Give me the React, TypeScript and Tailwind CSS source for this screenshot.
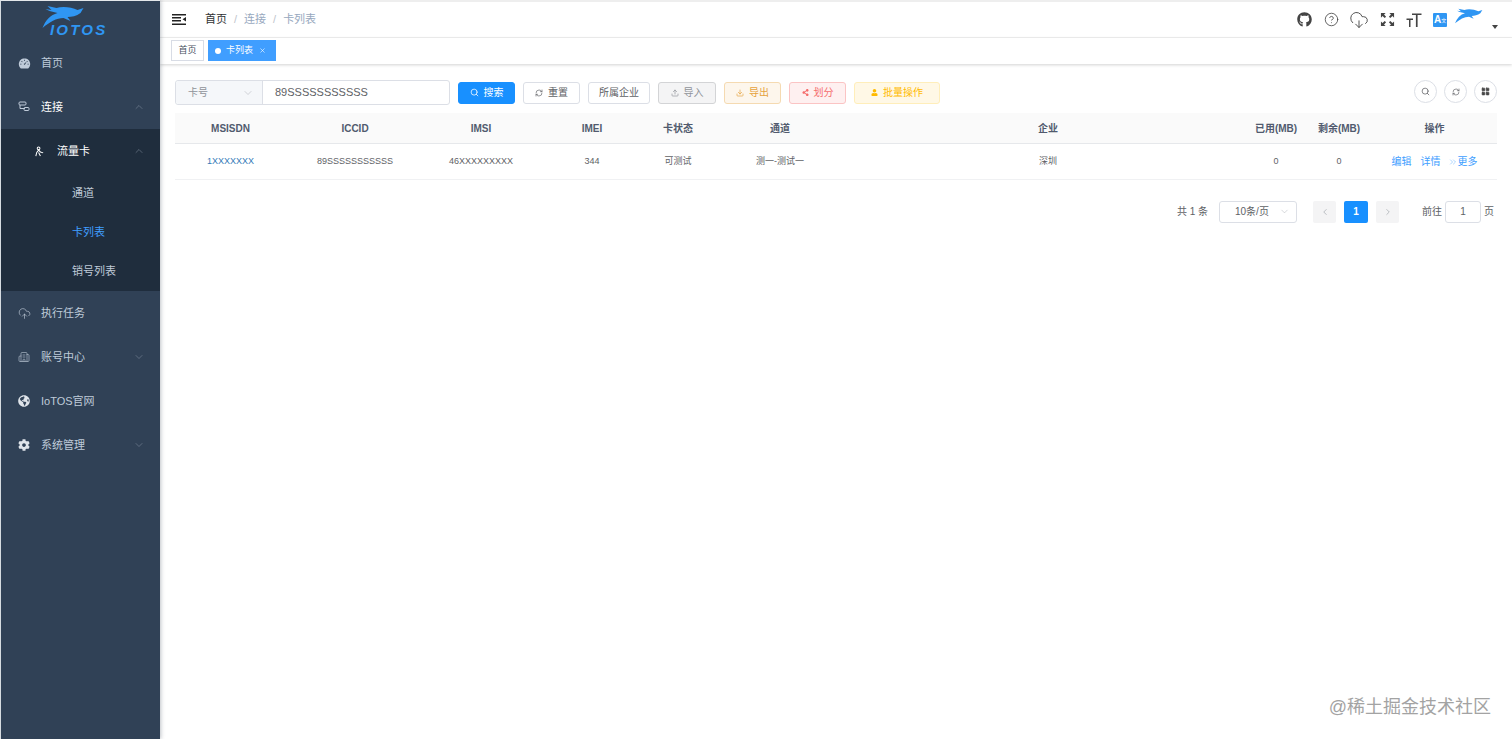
import React from "react";
import { Search, RefreshCw, Upload, Download, ChevronUp, ChevronDown, ChevronLeft, ChevronRight, ChevronsRight, CloudUpload, CloudDownload, Building2, X, LayoutGrid, CircleHelp } from "lucide-react";
import { AiFillDashboard } from "react-icons/ai";
import { FaGithub, FaGlobeAmericas, FaCog, FaUser, FaShareAlt } from "react-icons/fa";

const Bird = ({ className }: { className: string }) => (
  <svg viewBox="0 0 42 24" className={className} fill="#2f96f3">
    <path d="M0 23C3 15 8 10 15 8L7 6 3 4 9 5 5 1 14 3C20 1 29 2 35 5L41 3 38 8C34 11 29 12 25 12L28 16 21 13C14 13 7 17 0 23Z" />
  </svg>
);

const NetIcon = () => (
  <svg viewBox="0 0 12 12" className="w-[12px] h-[12px]" fill="none" stroke="#bfcbd9" strokeWidth="1">
    <rect x="1" y="1" width="7" height="3" rx="1" />
    <path d="M2 4v3.5h5" />
    <rect x="6" y="6.5" width="5" height="3" rx="1" />
  </svg>
);

const PersonIcon = () => (
  <svg viewBox="0 0 12 12" className="w-[11px] h-[11px]" fill="none" stroke="#ffffff" strokeWidth="1.1">
    <circle cx="5" cy="2.5" r="1.5" />
    <path d="M2 11l1-4 2-2.500 2 2 3 1M5 7l2 4" />
  </svg>
);

const TextSizeIcon = () => (
  <svg viewBox="0 0 16 16" className="w-[16px] h-[16px]" fill="#444">
    <path d="M6 1.500h9.500v1.600h-3.900V15h-1.700V3.100H6zM.5 6.500h6.500v1.400H4.500V15H3V7.900H.5z" />
  </svg>
);

const FullIcon = () => (
  <svg viewBox="0 0 16 16" className="w-[15px] h-[15px]" fill="#444">
    <path d="M1 1h5L4.300 2.700 6.500 5 5 6.500 2.700 4.300 1 6zM15 1v5l-1.700-1.700L11 6.500 9.500 5l2.200-2.300L10 1zM1 15v-5l1.700 1.700L5 9.500 6.500 11l-2.200 2.300L6 15zM15 15h-5l1.700-1.700L9.500 11 11 9.500l2.300 2.200L15 10z" />
  </svg>
);

const Side = ({ icon, label, arrow, active }: { icon: React.ReactNode; label: string; arrow?: "up" | "down"; active?: boolean }) => (
  <div className="h-[44px] flex items-center pl-[16px] pr-[15px] shrink-0">
    <span className="w-[14px] flex justify-center mr-[10px]">{icon}</span>
    <span className={active ? "text-[11px] text-white" : "text-[11px] text-[#bfcbd9]"}>{label}</span>
    {arrow === "up" && <ChevronUp className="ml-auto text-[#8a97a6]" size={12} strokeWidth={1} />}
    {arrow === "down" && <ChevronDown className="ml-auto text-[#8a97a6]" size={12} strokeWidth={1} />}
  </div>
);

const Btn = ({ cls, icon, label }: { cls: string; icon?: React.ReactNode; label: string }) => (
  <div className={"h-[22px] flex items-center justify-center gap-[5px] rounded-[3px] border text-[10px] " + cls}>
    {icon}
    <span>{label}</span>
  </div>
);

const cols = "grid grid-cols-[111px_138px_114px_108px_64px_140px_396px_60px_66px_125px]";
const headers = ["MSISDN", "ICCID", "IMSI", "IMEI", "卡状态", "通道", "企业", "已用(MB)", "剩余(MB)", "操作"];

export default function App() {
  return (
    <div className="relative w-full h-screen flex bg-white overflow-hidden text-[#606266] font-['Liberation_Sans','Noto_Sans_CJK_SC',sans-serif]">
      <aside className="w-[160px] shrink-0 h-full bg-[#304156] border-l border-l-[#d5dbe0] border-t border-t-[#e4e7ea] flex flex-col shadow-[1px_0_4px_rgba(0,21,41,0.25)] z-10">
        <div className="h-[40px] shrink-0 relative pl-[41px] pt-[4px]">
          <Bird className="w-[43px] h-[24px]" />
          <span className="absolute left-[49px] top-[21px] text-[15px] leading-[16px] font-bold italic tracking-[2.2px] text-[#2f96f3]">IOTOS</span>
        </div>
        <Side icon={<AiFillDashboard size={13} color="#bfcbd9" />} label="首页" />
        <Side icon={<NetIcon />} label="连接" arrow="up" active />
        <div className="bg-[#1f2d3d] flex flex-col shrink-0">
          <div className="h-[44px] flex items-center pl-[32px] pr-[15px]">
            <span className="w-[12px] flex justify-center mr-[12px]"><PersonIcon /></span>
            <span className="text-[11px] text-white">流量卡</span>
            <ChevronUp className="ml-auto text-[#8a97a6]" size={12} strokeWidth={1} />
          </div>
          <div className="h-[39.5px] flex items-center pl-[71px] text-[11px] text-[#bfcbd9]">通道</div>
          <div className="h-[39.5px] flex items-center pl-[71px] text-[11px] text-[#409eff]">卡列表</div>
          <div className="h-[39px] flex items-center pl-[71px] text-[11px] text-[#bfcbd9]">销号列表</div>
        </div>
        <Side icon={<CloudUpload size={13} color="#bfcbd9" strokeWidth={1.2} />} label="执行任务" />
        <Side icon={<Building2 size={12} color="#bfcbd9" strokeWidth={1.2} />} label="账号中心" arrow="down" />
        <Side icon={<FaGlobeAmericas size={12} color="#dfe4ea" />} label="IoTOS官网" />
        <Side icon={<FaCog size={12} color="#dfe4ea" />} label="系统管理" arrow="down" />
      </aside>

      <main className="flex-1 min-w-0 flex flex-col border-t-2 border-t-[#eeeeee]">
        <header className="h-[36px] shrink-0 flex items-center pl-[12px] pr-[14px] border-b border-b-[#f0f0f0]">
          <svg viewBox="0 0 14 11" className="w-[14px] h-[11px] mr-[19px]" fill="#222">
            <path d="M0 0h14v1.500H0zM0 3h9v1.500H0zM0 6h9v1.500H0zM0 9.500h14V11H0zM14 3v4.500L10.500 5.300z" />
          </svg>
          <span className="text-[11px] text-[#303133]">首页</span>
          <span className="text-[11px] text-[#c0c4cc] mx-[7px]">/</span>
          <span className="text-[11px] text-[#97a8be]">连接</span>
          <span className="text-[11px] text-[#c0c4cc] mx-[7px]">/</span>
          <span className="text-[11px] text-[#97a8be]">卡列表</span>
          <div className="ml-auto flex items-center">
            <FaGithub size={15} color="#444" />
            <CircleHelp size={15} color="#444" strokeWidth={1.3} className="ml-[12px]" />
            <CloudDownload size={20} color="#444" strokeWidth={1.1} className="ml-[10px]" />
            <span className="ml-[11px]"><FullIcon /></span>
            <span className="ml-[11px]"><TextSizeIcon /></span>
            <div className="ml-[11px] w-[14px] h-[14px] rounded-[1px] bg-[#2f96f3] text-white text-[10px] font-bold leading-[14px] pl-[1px]">A<span className="text-[5px] align-top font-normal">文</span></div>
            <Bird className="ml-[8px] w-[28px] h-[18px] -mt-[8px]" />
            <svg viewBox="0 0 6 4" className="w-[6px] h-[4px] ml-[9px] mt-[15px]" fill="#444"><path d="M0 0h6L3 4z" /></svg>
          </div>
        </header>

        <div className="h-[26px] shrink-0 flex items-start pt-[2px] pl-[11px] gap-[4px] shadow-[0_1px_3px_rgba(0,0,0,0.18)]">
          <div className="h-[21px] w-[33px] border border-[#d8dce5] flex items-center justify-center text-[9px] text-[#495060]">首页</div>
          <div className="h-[21px] w-[68px] bg-[#409eff] flex items-center pl-[7px] text-[9px] text-white">
            <span className="w-[6px] h-[6px] rounded-full bg-white mr-[5px]" />
            <span>卡列表</span>
            <X size={7} className="ml-[6px]" />
          </div>
        </div>

        <div className="flex-1 pl-[15px] pr-[15px] pt-[16px]">
          <div className="flex items-center h-[25px]">
            <div className="w-[275px] h-[25px] flex border border-[#dcdfe6] rounded-[3px] shrink-0">
              <div className="w-[87px] bg-[#f5f7fa] border-r border-r-[#dcdfe6] flex items-center pl-[12px] pr-[8px] text-[10px] text-[#909399] rounded-l-[3px]">
                <span>卡号</span>
                <ChevronDown size={12} strokeWidth={1} className="ml-auto text-[#a8abb2]" />
              </div>
              <div className="flex-1 flex items-center pl-[12px] text-[11px] text-[#606266]">89SSSSSSSSSSS</div>
            </div>
            <div className="flex items-center gap-[8px] ml-[8px]">
              <Btn cls="w-[57px] bg-[#1890ff] border-[#1890ff] text-white" icon={<Search size={9} />} label="搜索" />
              <Btn cls="w-[57px] border-[#dcdfe6] text-[#606266]" icon={<RefreshCw size={8} />} label="重置" />
              <Btn cls="w-[62px] border-[#dcdfe6] text-[#606266]" label="所属企业" />
              <Btn cls="w-[58px] bg-[#f4f4f5] border-[#d3d4d6] text-[#909399]" icon={<Upload size={8} />} label="导入" />
              <Btn cls="w-[57px] bg-[#fdf6ec] border-[#f5dab1] text-[#e6a23c]" icon={<Download size={8} />} label="导出" />
              <Btn cls="w-[57px] bg-[#fef0f0] border-[#fbc4c4] text-[#f56c6c]" icon={<FaShareAlt size={7} />} label="划分" />
              <Btn cls="w-[86px] bg-[#fff8e6] border-[#ffeeba] text-[#ffba00]" icon={<FaUser size={7} />} label="批量操作" />
            </div>
            <div className="ml-auto flex items-center gap-[7px] -mt-[2px]">
              <div className="w-[23px] h-[23px] rounded-full border border-[#dcdfe6] flex items-center justify-center text-[#606266]"><Search size={9} /></div>
              <div className="w-[23px] h-[23px] rounded-full border border-[#dcdfe6] flex items-center justify-center text-[#606266]"><RefreshCw size={8} /></div>
              <div className="w-[23px] h-[23px] rounded-full border border-[#dcdfe6] flex items-center justify-center text-[#444]"><LayoutGrid size={9} fill="#444" /></div>
            </div>
          </div>

          <div className="mt-[8px]">
            <div className={cols + " h-[31px] bg-[#fafafa] border-b border-b-[#e6e8eb] items-center"}>
              {headers.map((h) => (
                <div key={h} className="text-center text-[10px] font-bold text-[#515a6e]">{h}</div>
              ))}
            </div>
            <div className={cols + " h-[36px] border-b border-b-[#f0f1f3] items-center text-[9px] text-[#606266]"}>
              <div className="text-center text-[#337ab7]">1XXXXXXX</div>
              <div className="text-center">89SSSSSSSSSSS</div>
              <div className="text-center">46XXXXXXXXX</div>
              <div className="text-center">344</div>
              <div className="text-center">可测试</div>
              <div className="text-center">测一-测试一</div>
              <div className="text-center">深圳</div>
              <div className="text-center">0</div>
              <div className="text-center">0</div>
              <div className="flex justify-center items-center gap-[9px] text-[#409eff] text-[10px]">
                <span>编辑</span>
                <span>详情</span>
                <span className="flex items-center -ml-[2px]"><ChevronsRight size={10} strokeWidth={1} />更多</span>
              </div>
            </div>
          </div>

          <div className="mt-[20px] flex items-center justify-end pr-[3px] h-[23px] text-[10px] text-[#606266]">
            <span>共 1 条</span>
            <div className="ml-[11px] w-[78px] h-[22px] border border-[#dcdfe6] rounded-[3px] flex items-center pl-[15px] pr-[6px]">
              <span>10条/页</span>
              <ChevronDown size={11} strokeWidth={1} className="ml-auto text-[#a8abb2]" />
            </div>
            <div className="ml-[16px] w-[23px] h-[22px] bg-[#f4f4f5] rounded-[2px] flex items-center justify-center text-[#b0b3b8]"><ChevronLeft size={10} /></div>
            <div className="ml-[8px] w-[24px] h-[22px] bg-[#1890ff] rounded-[2px] flex items-center justify-center text-white font-bold">1</div>
            <div className="ml-[8px] w-[23px] h-[22px] bg-[#f4f4f5] rounded-[2px] flex items-center justify-center text-[#b0b3b8]"><ChevronRight size={10} /></div>
            <span className="ml-[23px]">前往</span>
            <div className="ml-[3px] w-[36px] h-[22px] border border-[#dcdfe6] rounded-[3px] flex items-center justify-center">1</div>
            <span className="ml-[3px]">页</span>
          </div>
        </div>
      </main>

      <div className="absolute right-[21px] top-[695px] text-[18px] leading-[24px] text-[#a3a3a3]">@稀土掘金技术社区</div>
    </div>
  );
}
